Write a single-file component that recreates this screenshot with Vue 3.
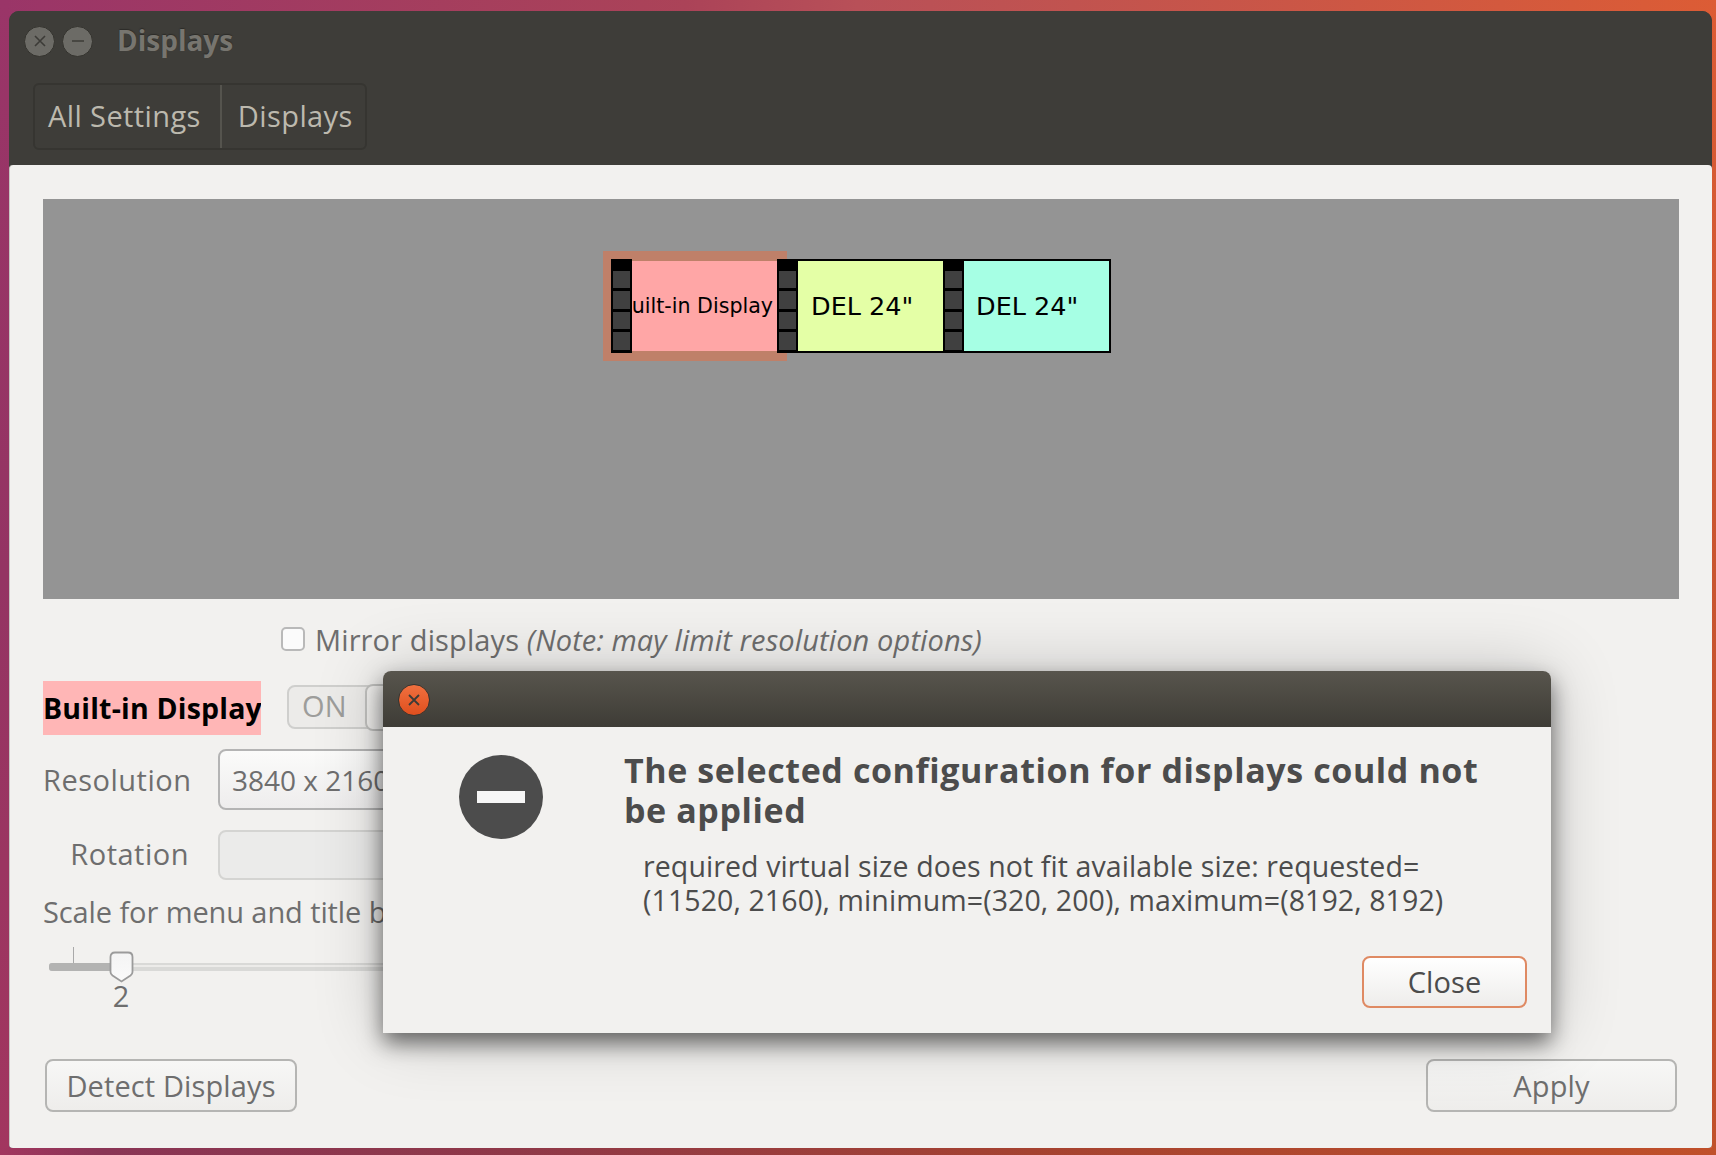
<script setup>
const monitors = [
  { name: 'Built-in Display', color: '#ffa6a6', cls: 'small' },
  { name: 'DEL 24"', color: '#e4ffa6', cls: 'pad-a' },
  { name: 'DEL 24"', color: '#a6ffe4', cls: 'pad-b' }
]
</script>

<template>
  <div class="desktop">
    <div class="window">
      <header class="titlebar">
        <div class="caption">
          <span class="wbtn">
            <svg width="14" height="14" viewBox="0 0 14 14"><path d="M2 2 12 12M12 2 2 12" stroke="#3c3b37" stroke-width="1.6" fill="none" /></svg>
          </span>
          <span class="wbtn">
            <svg width="14" height="14" viewBox="0 0 14 14"><path d="M1 7H13" stroke="#3c3b37" stroke-width="1.6" fill="none" /></svg>
          </span>
          <span class="wtitle">Displays</span>
        </div>
        <nav class="pathbar">
          <span class="crumb first">All Settings</span>
          <span class="crumb">Displays</span>
        </nav>
      </header>

      <main class="content">
        <section class="canvas">
          <div class="monitors">
            <div class="selection"></div>
            <div v-for="(m, i) in monitors" :key="i" class="monitor">
              <div class="strip"><i></i><i></i><i></i><i></i></div>
              <div class="screen" :class="m.cls" :style="{ background: m.color }"><span>{{ m.name }}</span></div>
            </div>
          </div>
        </section>

        <label class="mirror">
          <span class="check"></span>
          <span>Mirror displays <em>(Note: may limit resolution options)</em></span>
        </label>

        <div class="row named">
          <span class="dname">Built-in Display</span>
          <div class="switch"><span class="on">ON</span><span class="thumb"></span></div>
        </div>
        <div class="row res">
          <span class="lbl">Resolution</span>
          <div class="combo">3840 x 2160</div>
        </div>
        <div class="row rot">
          <span class="lbl">Rotation</span>
          <div class="combo off"></div>
        </div>
        <div class="scale">Scale for menu and title bars:</div>
        <div class="slider">
          <span class="tick"></span>
          <div class="track"><span class="fill"></span></div>
          <svg class="knob" width="25" height="32" viewBox="0 0 25 32">
            <defs>
              <linearGradient id="kg" x1="0" y1="0" x2="0" y2="1"><stop offset="0" stop-color="#f4f4f4" /><stop offset="1" stop-color="#fafafa" /></linearGradient>
            </defs>
            <path d="M6 1.500H19Q23.500 1.500 23.500 6V21Q23.500 23 21.500 24.500L12.500 30.500 3.500 24.500Q1.500 23 1.500 21V6Q1.500 1.500 6 1.500Z" fill="url(#kg)" stroke="#9b9b9b" stroke-width="1.800" />
          </svg>
          <span class="val">2</span>
        </div>

        <footer class="actions">
          <button class="btn">Detect Displays</button>
          <button class="btn apply">Apply</button>
        </footer>
      </main>

      <div class="dialog">
        <div class="dbar">
          <span class="dclose">
            <svg width="14" height="14" viewBox="0 0 14 14"><path d="M2 2 12 12M12 2 2 12" stroke="#3c3b37" stroke-width="1.800" fill="none" /></svg>
          </span>
        </div>
        <div class="dbody">
          <div class="stop"><span></span></div>
          <div class="dtext">
            <h1>The selected configuration for displays could not<br>be applied</h1>
            <p>required virtual size does not fit available size: requested=<br>(11520, 2160), minimum=(320, 200), maximum=(8192, 8192)</p>
          </div>
        </div>
        <div class="dfoot"><button class="btn close">Close</button></div>
      </div>
    </div>
  </div>
</template>

<style>
html, body { margin: 0; height: 100%; overflow: hidden; }
</style>

<style scoped>
* { box-sizing: border-box; }
.desktop {
  width: 1716px; height: 1155px; padding: 11px 4px 7px 9px;
  background:
    linear-gradient(90deg, #a2365f 0%, #8a3555 6%, #8f3848 30%, #a54230 60%, #c0502a 100%) bottom / 100% 7px no-repeat,
    linear-gradient(180deg, #9a3568, #943463 50%, #a2365f) left / 9px 100% no-repeat,
    linear-gradient(180deg, #dc5c35, #c8542f 50%, #c0502a) right / 4px 100% no-repeat,
    linear-gradient(90deg, #9a3568 0%, #ab4358 40%, #b85058 50%, #dc5c35 100%);
  font-family: "Open Sans", "Noto Sans", sans-serif;
  font-size: 29px;
  letter-spacing: .12px;
  color: #6e6e6e;
}
.window {
  position: relative; height: 100%; display: flex; flex-direction: column;
  background: #3c3b37; border-radius: 10px 10px 4px 4px; overflow: hidden;
}
.titlebar { height: 154px; flex: none; padding: 14px 0 0 15px; background: #3e3d39; }
.caption { display: flex; align-items: center; height: 32px; gap: 7px; }
.wbtn {
  width: 31px; height: 31px; border-radius: 50%; background: #6c6b66; border: 1px solid #35342f;
  display: flex; align-items: center; justify-content: center;
}
.wtitle { margin: 0 0 2px 17px; font-size: 28px; font-weight: 700; color: #77756f; text-shadow: 0 -1px 1px #2c2b28; letter-spacing: 0; }
.pathbar {
  display: inline-flex; margin: 26px 0 0 9px; height: 67px; border: 2px solid #363531; border-radius: 6px;
  color: #bcb9ae; align-items: stretch; letter-spacing: .4px;
}
.crumb { display: flex; align-items: center; padding: 0 12px 2px 16px; }
.crumb.first { border-right: 2px solid #55544e; padding-right: 19px; padding-left: 13px; }
.content {
  flex: 1; display: flex; flex-direction: column; padding: 34px 33px 36px 33px;
  background: #f2f1ef; border-left: 1px solid #c8c6c2; border-radius: 4px 4px 0 0;
}
.canvas { height: 400px; flex: none; background: #949494; padding: 58px 0 0 568px; }
.monitors {
  position: relative; display: inline-flex; height: 94px; border-right: 2px solid #000;
  border-top: 2px solid #000; border-bottom: 2px solid #000;
}
.selection { position: absolute; left: -8px; top: -10px; width: 184px; height: 110px; background: #bf8069; }
.monitor { position: relative; display: flex; width: 166px; height: 100%; }
.strip {
  width: 21px; flex: none; background: #000; margin: -2px 0; padding: 12px 2px 3px 2px;
  display: flex; flex-direction: column; gap: 3px;
}
.strip i { flex: 1; background: #404040; display: block; }
.screen {
  flex: 1; min-width: 0; overflow: hidden; display: flex; align-items: center; white-space: nowrap;
  font-family: "DejaVu Sans", sans-serif; color: #000; font-size: 25.500px; letter-spacing: 0;
}
.screen.small { font-size: 20.600px; justify-content: flex-end; padding-right: 4px; }
.screen.pad-a { padding-left: 13px; }
.screen.pad-b { padding-left: 12px; }
.mirror { display: flex; align-items: center; height: 24px; margin: 28px 0 0 238px; gap: 10px; white-space: nowrap; }
.mirror em { font-style: italic; }
.check { width: 24px; height: 24px; border: 2px solid #b9b9b9; border-radius: 5px; background: #fbfbfb; }
.row { display: flex; align-items: center; flex: none; }
.named { height: 54px; margin-top: 30px; gap: 26px; }
.dname { background: #ffb6b6; color: #000; font-weight: 700; font-size: 28.500px; letter-spacing: .2px; height: 54px; line-height: 54px; width: 218px; white-space: nowrap; overflow: hidden; }
.switch {
  position: relative; width: 170px; height: 44px; margin-bottom: 3px; border: 2px solid #cfcfcd; border-radius: 8px; background: #ecebe9;
  color: #9d9d9b; display: flex; align-items: center; padding: 0 0 2px 13px;
}
.thumb { position: absolute; left: 76px; top: -3px; bottom: -4px; right: -2px; border: 2px solid #c4c4c2; border-radius: 8px; background: #f5f4f2; }
.res { height: 61px; margin-top: 14px; }
.rot { height: 50px; margin-top: 20px; }
.lbl { width: 146px; text-align: right; letter-spacing: .5px; }
.rot .lbl { padding-bottom: 3px; }
.combo {
  margin-left: 29px; width: 520px; height: 100%; border: 2px solid #b4b4b4; border-radius: 8px;
  background: linear-gradient(#fbfbfa, #eeeded); display: flex; align-items: center; padding-left: 12px; white-space: nowrap;
  font-size: 28px; letter-spacing: 0;
}
.combo.off { background: #ebebea; border-color: #d4d4d2; }
.scale { margin-top: 16px; height: 32px; line-height: 32px; white-space: nowrap; letter-spacing: -.1px; }
.slider { position: relative; height: 37px; margin-top: 17px; flex: none; }
.tick { position: absolute; left: 30px; top: 2px; width: 1px; height: 16px; background: #a9a9a9; }
.track { position: absolute; left: 6px; top: 18px; width: 1000px; height: 8px; border-radius: 3px; background: linear-gradient(#d9d9d7 0 25%, #ecebe9 25% 45%, #d9d9d7 45%); }
.fill { position: absolute; left: 0; top: 0; width: 66px; height: 8px; background: #b3b3b2; border-radius: 3px 0 0 3px; }
.knob { position: absolute; left: 66px; top: 6px; }
.val { position: absolute; left: 66px; width: 24px; top: 36px; text-align: center; line-height: 30px; letter-spacing: 0; }
.actions { margin-top: auto; display: flex; justify-content: space-between; padding: 0 2px; }
.btn {
  width: 252px; height: 53px; border: 2px solid #b5b5b3; border-radius: 8px; background: linear-gradient(#f7f7f6, #eeedeb);
  font: inherit; letter-spacing: inherit; color: #6e6e6e; padding: 0;
}
.apply { width: 251px; }
.dialog {
  position: absolute; left: 374px; top: 660px; width: 1168px; height: 362px; background: #f2f1ef;
  border-radius: 8px 8px 0 0; box-shadow: 0 10px 22px rgba(0,0,0,.55), 0 0 70px rgba(0,0,0,.2);
  display: flex; flex-direction: column;
}
.dbar { height: 56px; flex: none; border-radius: 8px 8px 0 0; background: linear-gradient(#58554d, #3e3c36); padding: 13px 0 0 15px; }
.dclose {
  width: 32px; height: 32px; border-radius: 50%; border: 1px solid #35342f; background: linear-gradient(#f0703f, #df4f1e);
  display: flex; align-items: center; justify-content: center;
}
.dbody { display: flex; flex: 1; padding: 28px 24px 0 0; color: #4c4c4c; }
.stop { width: 84px; height: 84px; margin-left: 76px; border-radius: 50%; background: #4c4c4c; flex: none; display: flex; align-items: center; justify-content: center; }
.stop span { width: 48px; height: 12px; background: #f6f6f6; }
.dtext { margin-left: 81px; margin-top: -5px; }
h1 { margin: 0; font-size: 34px; line-height: 40px; font-weight: 700; letter-spacing: .6px; white-space: nowrap; }
p { margin: 19px 0 0 19px; line-height: 34px; white-space: nowrap; font-size: 28.500px; letter-spacing: .1px; }
.dfoot { display: flex; justify-content: flex-end; padding: 0 24px 25px 0; }
.btn.close { width: 165px; height: 52px; padding-bottom: 2px; border-color: #df8a63; background: linear-gradient(#fff, #eeedeb); color: #4c4c4c; }
</style>
